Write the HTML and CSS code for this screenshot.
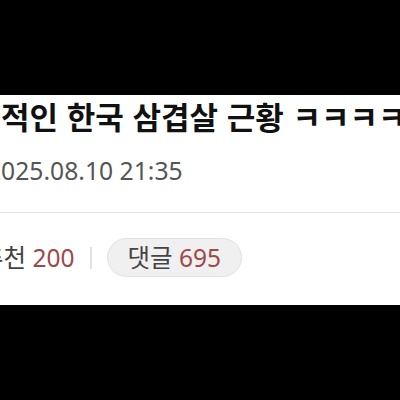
FILE: index.html
```html
<!DOCTYPE html>
<html lang="ko">
<head>
    <meta charset="UTF-8">
    <meta name="viewport" content="width=device-width, initial-scale=1.0">
    <title>삼겹살 근황</title>
    <link rel="stylesheet" href="styles.css">
</head>
<body>
    <div class="post">
        <div class="post-head">
            <h1 class="title">적인 한국 삼겹살 근황 ㅋㅋㅋㅋ</h1>
            <p class="date">2025.08.10 21:35</p>
        </div>
        <div class="meta">
            <span class="stat">추천 <em>200</em></span>
            <span class="sep"></span>
            <span class="stat pill">댓글 <em>695</em></span>
        </div>
    </div>
</body>
</html>
```

FILE: styles.css
```css
body {
    margin: 0;
    background-color: #000;
    font-family: "Noto Sans", "Noto Sans CJK KR", sans-serif;
}
.post {
    margin-top: 95px;
    height: 210px;
    background-color: #fff;
    overflow: hidden;
}
.post-head {
    border-bottom: 1px solid #e3e3e3;
    padding-bottom: 25px;
}
.title {
    margin: 0;
    padding-left: 1px;
    font-family: "Noto Sans CJK KR", sans-serif;
    font-size: 31px;
    font-weight: 700;
    line-height: 42px;
    color: #111;
    white-space: nowrap;
}
.date {
    margin: 18px 0 0 -13px; /* the first digit falls outside the crop */
    font-size: 24.7px;
    line-height: 32px;
    color: #555;
}
.meta {
    display: flex;
    align-items: center;
    margin-top: 25px;
    margin-left: -19px;
}
.stat {
    font-size: 24.5px;
    line-height: 37px;
    color: #444;
    white-space: nowrap;
}
.stat em {
    font-style: normal;
    color: #a04848;
}
.sep {
    width: 2px;
    height: 22px;
    margin: 0 15px;
    background-color: #e2e2e2;
}
.pill {
    padding: 0 20px;
    border: 1px solid #e2e2e2;
    border-radius: 20px;
    background-color: #f0f0f0;
}
```
